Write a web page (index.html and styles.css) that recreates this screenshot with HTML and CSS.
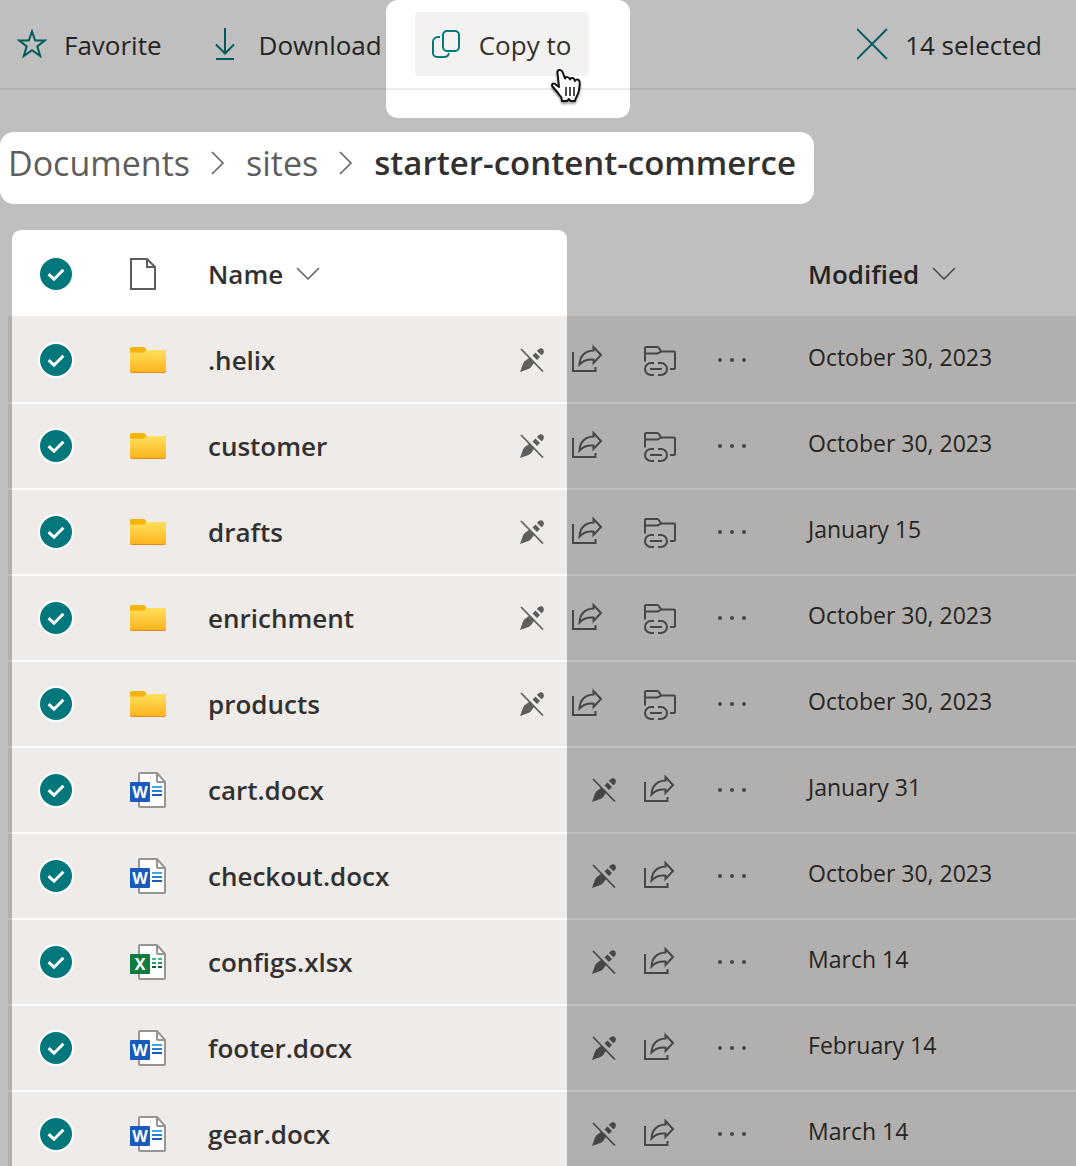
FILE: index.html
```html
<!DOCTYPE html>
<html lang="en">
<head>
<meta charset="utf-8">
<meta name="viewport" content="width=device-width, initial-scale=1">
<title>starter-content-commerce</title>
<link rel="stylesheet" href="styles.css">
</head>
<body>
<svg class="sprite" aria-hidden="true">
  <defs>
    <linearGradient id="folder-fill" x1="0" y1="0" x2="0" y2="1">
      <stop offset="0" stop-color="#ffe05c"/><stop offset="1" stop-color="#ffb41f"/>
    </linearGradient>
  </defs>
  <symbol id="tick" viewBox="0 0 32 32"><path d="M8.6 16.2 14 21.2 23.4 11.8" fill="none" stroke="#fff" stroke-width="3"/></symbol>
  <symbol id="folder" viewBox="0 0 36 26">
    <path d="M0 2a2 2 0 0 1 2-2h11a3 3 0 0 1 3 3v4H0z" fill="#f4b400"/>
    <path d="M0 5.500h13.500L16.500 3H34a2 2 0 0 1 2 2v19a2 2 0 0 1-2 2H2a2 2 0 0 1-2-2z" fill="#e08a22"/>
    <path d="M0 5.500h13.500L16.500 3H34a2 2 0 0 1 2 2v18a2 2 0 0 1-2 2H2a2 2 0 0 1-2-2z" fill="url(#folder-fill)"/>
  </symbol>
  <symbol id="page" viewBox="0 0 36 36">
    <path d="M10 1H27l8 9v24a1 1 0 0 1-1 1H10a1 1 0 0 1-1-1V2a1 1 0 0 1 1-1z" fill="#fff" stroke="#979593" stroke-width="2"/>
    <path d="M27 1v8a1 1 0 0 0 1 1h7" fill="none" stroke="#979593" stroke-width="2"/>
  </symbol>
  <symbol id="unpublished" viewBox="0 0 24 24">
    <path d="M0 24 3 15.500C4.500 12.500 7 11.500 10 9.500L14.500 14C12.500 17 11.500 19.500 8.500 21Z" fill="currentColor"/>
    <path d="M12.500 7.500 15.500 4.500 20 9 17 12Z" fill="currentColor"/>
    <path d="M17 3C19-.3 21.500-.3 23 1 24.500 3 24 5.500 21.500 7.200Z" fill="currentColor"/>
    <path d="M1 1 23 23.500" stroke="currentColor" stroke-width="1.700"/>
  </symbol>
  <symbol id="share" viewBox="1 0 32 32">
    <path d="M2 8v19h22.500v-4" fill="none" stroke="currentColor" stroke-width="2"/>
    <path d="M22.500 3 30 11l-7.500 8v-3.500C17 15 12 16.500 8.500 20.500 9 12 14 7 22.500 6.500Z" fill="none" stroke="currentColor" stroke-width="2"/>
  </symbol>
  <symbol id="link-folder" viewBox="0 -2 32 32">
    <g fill="none" stroke="currentColor" stroke-width="2">
      <path d="M1 15.500V2a1 1 0 0 1 1-1h11.500c2 0 2 4.500 4.500 4.500h12a1 1 0 0 1 1 1V22a1 1 0 0 1-1 1h-4M1 7.500h12c2.500 0 2.500-2 5-2"/>
      <path d="M10 17H7a6 6 0 0 0 0 12h3M14 17h3a6 6 0 0 1 0 12h-3M6 23h12"/>
    </g>
  </symbol>
  <symbol id="more" viewBox="0 0 32 32"><g fill="currentColor"><circle cx="4" cy="16" r="2"/><circle cx="16" cy="16" r="2"/><circle cx="28" cy="16" r="2"/></g></symbol>
  <symbol id="crumb-arrow" viewBox="0 0 14 24"><path d="M1 1 12 12 1 23" fill="none" stroke="currentColor" stroke-width="1.500"/></symbol>
  <symbol id="sort-arrow" viewBox="0 0 24 14"><path d="M1 1 12 12 23 1" fill="none" stroke="currentColor" stroke-width="1.500"/></symbol>
</svg>

<div class="app">
  <header class="toolbar">
    <button class="command" type="button">
      <svg class="icon-32" viewBox="0 0 32 32"><path d="M16 3.500 19.200 12.500H28.700L21.300 18.400 24.200 28 16 22.200 7.800 28 10.700 18.400 3.300 12.500H12.800Z" fill="none" stroke="currentColor" stroke-width="2"/></svg>
      <span>Favorite</span>
    </button>
    <button class="command" type="button">
      <svg class="icon-32" viewBox="0 0 32 32"><path d="M14 0v25M5 16.500 14 25.500 23 16.500M5 31H23" fill="none" stroke="currentColor" stroke-width="2"/></svg>
      <span>Download</span>
    </button>
    <button class="command command-active" type="button">
      <svg class="icon-32" viewBox="0 0 32 32"><g fill="none" stroke="currentColor" stroke-width="2"><rect x="12" y="3" width="16" height="20" rx="4"/><path d="M9 9H7a5 5 0 0 0-5 5v11a4 4 0 0 0 4 4h7a5 5 0 0 0 5-4"/></g></svg>
      <span>Copy to</span>
      <svg class="pointer" viewBox="0 0 33 36" aria-hidden="true">
        <path d="M9 19 5 16C3 14.500 1 16.500 2.500 18.500L8 25C9.500 28 11 28 11.500 30L12 33H17L19 31 20.500 33H25C25 30 28.500 27 29 22 29.500 18 30.500 14 29 12.500 27.500 11 25.500 11.500 25 13 24.500 9.500 21 9 20 11.500 19 8.500 16 8.500 15 10.500L12.500 4C11 1 7 1.500 7.500 5Z" fill="#fff" stroke="#111" stroke-width="2" stroke-linejoin="round"/>
        <path d="M16 19v9M20 19v9M24 19v9" stroke="#111" stroke-width="1.500"/>
      </svg>
    </button>
    <button class="command command-clear" type="button">
      <svg class="icon-32" viewBox="0 0 32 32"><path d="M0 1 30 31M30 1 0 31" fill="none" stroke="currentColor" stroke-width="1.800"/></svg>
      <span>14 selected</span>
    </button>
  </header>

  <nav class="crumbs" aria-label="Breadcrumb">
    <a href="#documents">Documents</a>
    <svg class="crumb-arrow"><use href="#crumb-arrow"/></svg>
    <a href="#sites">sites</a>
    <svg class="crumb-arrow"><use href="#crumb-arrow"/></svg>
    <span class="current" aria-current="page">starter-content-commerce</span>
  </nav>

  <table class="files">
    <colgroup><col class="col-check"><col class="col-type"><col class="col-name"><col class="col-actions"><col></colgroup>
    <thead>
      <tr>
        <th><label class="check"><input type="checkbox" checked aria-label="Select all"><svg><use href="#tick"/></svg></label></th>
        <th><svg class="type-head" viewBox="0 0 26 32"><path d="M1 1H17L25 9V31H1ZM17 1V9H25" fill="none" stroke="#605e5c" stroke-width="2"/></svg></th>
        <th colspan="2"><button class="sort" type="button">Name <svg class="sort-arrow"><use href="#sort-arrow"/></svg></button></th>
        <th><button class="sort" type="button">Modified <svg class="sort-arrow"><use href="#sort-arrow"/></svg></button></th>
      </tr>
    </thead>
    <tbody id="rows"></tbody>
  </table>

  <svg class="dimmer" aria-hidden="true">
    <mask id="spotlights" maskUnits="userSpaceOnUse" x="0" y="0" width="100%" height="100%">
      <rect width="100%" height="100%" fill="#fff"/>
      <rect x="386" width="244" height="118" rx="12"/>
      <rect y="132" width="814" height="72" rx="14"/>
      <rect x="12" y="230" width="555" height="2000" rx="9"/>
    </mask>
    <rect width="100%" height="100%" fill-opacity=".25" mask="url(#spotlights)"/>
  </svg>
</div>
<script src="files.js"></script>
</body>
</html>
```
FILE: styles.css
```css
* { box-sizing: border-box; }

body {
  margin: 0;
  background: #fff;
  color: #323130;
  font-family: "Open Sans", "Noto Sans", sans-serif;
  font-size: 26px;
  line-height: 36px;
}

button {
  font: inherit;
  color: inherit;
  background: none;
  border: 0;
  padding: 0;
}

svg { display: block; flex: none; }
.sprite { position: absolute; width: 0; height: 0; }

.app {
  position: relative;
  height: 100vh;
  overflow: hidden;
}

/* Guided-tour shade with cut-outs over the highlighted parts */
.dimmer {
  position: absolute;
  inset: 0;
  width: 100%;
  height: 100%;
  pointer-events: none;
}

/* Command bar */
.toolbar {
  display: flex;
  align-items: center;
  gap: 17px;
  height: 90px;
  border-bottom: 2px solid #edebe9;
}

.command {
  position: relative;
  display: flex;
  align-items: center;
  gap: 16px;
  height: 64px;
  padding: 0 16px;
  border-radius: 4px;
  white-space: nowrap;
}

.command span { padding-top: 2px; }
.command svg { color: #03787c; }
.command-active { padding: 0 18px 0 16px; background: #f3f2f1; }
.command-clear { margin-left: auto; margin-right: 18px; }
.icon-32 { width: 32px; height: 32px; }

.pointer {
  position: absolute;
  left: 135px;
  top: 56px;
  width: 33px;
  height: 36px;
  filter: drop-shadow(0 2px 1px rgba(0, 0, 0, .4));
}

/* Breadcrumb */
.crumbs {
  display: flex;
  align-items: center;
  gap: 21px;
  height: 72px;
  margin-top: 42px;
  padding: 0 8px 10px;
  font-size: 34px;
  line-height: 48px;
  white-space: nowrap;
}

.crumbs a { color: #605e5c; text-decoration: none; }
.crumbs svg { color: #605e5c; }
.current { font-size: 33px; font-weight: 600; }
.crumb-arrow { width: 14px; height: 24px; }

/* File list */
.files {
  width: calc(100% - 8px);
  margin: 26px 0 0 8px;
  border-collapse: separate;
  border-spacing: 0;
  table-layout: fixed;
}

.col-check { width: 96px; }
.col-type { width: 104px; }
.col-name { width: 304px; }
.col-actions { width: 296px; }

th, td { padding: 0; text-align: left; vertical-align: middle; white-space: nowrap; }
th { height: 88px; padding-top: 2px; border-bottom: 2px solid #eeebe8; }
td { height: 86px; background: #eeebe8; border-bottom: 2px solid #fff; }
th:nth-child(2), td:nth-child(2) { padding-left: 26px; }

.check {
  display: grid;
  width: 32px;
  height: 32px;
  margin-left: 32px;
}

.check input, .check svg { grid-area: 1 / 1; width: 32px; height: 32px; margin: 0; }
.check svg { pointer-events: none; }
.check input {
  appearance: none;
  border-radius: 50%;
  background: #03787c;
  box-shadow: 0 0 0 2px #fff;
}

.type-head { width: 26px; height: 32px; }
.icon-folder { width: 36px; height: 26px; }
.icon-file { width: 36px; height: 36px; }
.badge-letter {
  fill: #fff;
  font: 700 16px "Open Sans", sans-serif;
}

.sort { display: flex; align-items: center; gap: 13px; font-weight: 600; }
.sort-arrow { width: 24px; height: 14px; color: #605e5c; }
.name { color: inherit; font-weight: 600; text-decoration: none; }

.actions {
  display: flex;
  justify-content: flex-end;
  align-items: center;
  padding-right: 40px;
  color: #605e5c;
}

.action { display: grid; place-items: center; width: 72px; height: 40px; }
.action svg { width: 32px; height: 32px; }
.status { display: grid; place-items: center; width: 40px; }
.status svg { width: 24px; height: 24px; }
.date { padding-bottom: 6px; font-size: 23px; }
```
FILE: files.js
```js
const files = [
  ["folder", ".helix", "October 30, 2023"],
  ["folder", "customer", "October 30, 2023"],
  ["folder", "drafts", "January 15"],
  ["folder", "enrichment", "October 30, 2023"],
  ["folder", "products", "October 30, 2023"],
  ["word", "cart.docx", "January 31"],
  ["word", "checkout.docx", "October 30, 2023"],
  ["excel", "configs.xlsx", "March 14"],
  ["word", "footer.docx", "February 14"],
  ["word", "gear.docx", "March 14"]
];

const typeIcons = {
  folder: `<svg class="icon-folder"><use href="#folder"/></svg>`,
  word: `<svg class="icon-file" viewBox="0 0 36 36">
    <use href="#page" width="36" height="36"/>
    <path d="M22 14h10v2H22z" fill="#41a5ee"/><path d="M22 18h10v2H22z" fill="#2b7cd3"/><path d="M22 22h10v2H22z" fill="#185abd"/>
    <rect y="10" width="20" height="20" rx="1" fill="#185abd"/>
    <text class="badge-letter" x="10" y="26" text-anchor="middle">W</text></svg>`,
  excel: `<svg class="icon-file" viewBox="0 0 36 36">
    <use href="#page" width="36" height="36"/>
    <path d="M22 14h4v2h-4zM28 14h4v2h-4z" fill="#33c481"/><path d="M22 18h4v2h-4zM28 18h4v2h-4z" fill="#21a366"/><path d="M22 22h4v2h-4zM28 22h4v2h-4z" fill="#185c37"/>
    <rect y="10" width="20" height="20" rx="1" fill="#107c41"/>
    <text class="badge-letter" x="10" y="26" text-anchor="middle">X</text></svg>`
};

const action = (icon, label) =>
  `<button class="action" type="button" aria-label="${label}"><svg><use href="#${icon}"/></svg></button>`;

document.getElementById("rows").innerHTML = files.map(([type, name, date]) => `
  <tr>
    <td><label class="check"><input type="checkbox" checked aria-label="Select ${name}"><svg><use href="#tick"/></svg></label></td>
    <td>${typeIcons[type]}</td>
    <td><a class="name" href="#${name}">${name}</a></td>
    <td><div class="actions">
      <span class="status"><svg><use href="#unpublished"/></svg></span>
      ${action("share", "Share")}
      ${type === "folder" ? action("link-folder", "Add shortcut") : ""}
      ${action("more", "More actions")}
    </div></td>
    <td><div class="date">${date}</div></td>
  </tr>`).join("");
```
